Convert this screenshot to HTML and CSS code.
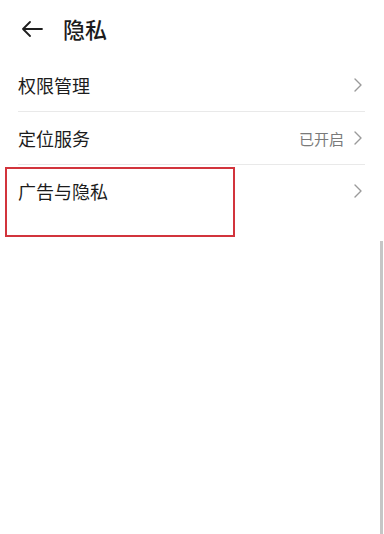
FILE: index.html
```html
<!DOCTYPE html>
<html lang="zh-CN">
<head>
<meta charset="utf-8">
<title>隐私</title>
<link rel="stylesheet" href="styles.css">
</head>
<body>
<div class="page">
  <header class="header">
    <svg class="back" width="22" height="16" viewBox="0 0 22 16" aria-hidden="true">
      <path d="M21 8 H2 M9 1 L2 8 L9 15" fill="none" stroke="#1f1f1f" stroke-width="1.8" stroke-linecap="round" stroke-linejoin="round"/>
    </svg>
    <h1 class="title">隐私</h1>
  </header>
  <ul class="list">
    <li class="row">
      <span class="label">权限管理</span>
      <span class="right">
        <svg class="chev" width="8" height="14" viewBox="0 0 8 14"><path d="M1 1 L7 7 L1 13" fill="none" stroke="#9a9a9a" stroke-width="1.4" stroke-linecap="round" stroke-linejoin="round"/></svg>
      </span>
    </li>
    <li class="row">
      <span class="label">定位服务</span>
      <span class="right">
        <span class="value">已开启</span>
        <svg class="chev" width="8" height="14" viewBox="0 0 8 14"><path d="M1 1 L7 7 L1 13" fill="none" stroke="#9a9a9a" stroke-width="1.4" stroke-linecap="round" stroke-linejoin="round"/></svg>
      </span>
    </li>
    <li class="row last">
      <span class="label">广告与隐私</span>
      <span class="right">
        <svg class="chev" width="8" height="14" viewBox="0 0 8 14"><path d="M1 1 L7 7 L1 13" fill="none" stroke="#9a9a9a" stroke-width="1.4" stroke-linecap="round" stroke-linejoin="round"/></svg>
      </span>
    </li>
  </ul>
  <div class="highlight"></div>
  <div class="scrollbar"></div>
</div>
</body>
</html>
```

FILE: styles.css
```css
html, body {
  margin: 0;
  padding: 0;
  background: #ffffff;
}
body {
  font-family: "Noto Sans CJK SC", "Noto Sans", sans-serif;
  color: #1c1c1c;
}
.page {
  position: relative;
  width: 384px;
  height: 534px;
  overflow: hidden;
}
.header {
  height: 56px;
  display: flex;
  align-items: center;
  padding-left: 21px;
  gap: 20px;
}
.back {
  display: block;
  margin-top: 1px;
}
.title {
  margin: 0;
  font-size: 22px;
  font-weight: 500;
  letter-spacing: 0;
  line-height: 1;
}
.list {
  list-style: none;
  margin: 0;
  padding: 3px 0 0 0;
}
.row {
  height: 52px;
  margin: 0 19px 0 18px;
  display: flex;
  align-items: center;
  justify-content: space-between;
  border-bottom: 1px solid #e9e9e9;
}
.row.last {
  border-bottom: none;
}
.label {
  font-size: 18px;
  line-height: 1;
}
.right {
  display: flex;
  align-items: center;
  gap: 10px;
  margin-right: 3px;
}
.value {
  font-size: 15px;
  color: #7a7a7a;
  line-height: 1;
}
.chev {
  display: block;
}
.highlight {
  position: absolute;
  left: 5px;
  top: 167px;
  width: 226px;
  height: 66px;
  border: 2px solid #d2343c;
}
.scrollbar {
  position: absolute;
  left: 380px;
  top: 241px;
  width: 3px;
  bottom: 0;
  background: #c6c6c6;
}
```
